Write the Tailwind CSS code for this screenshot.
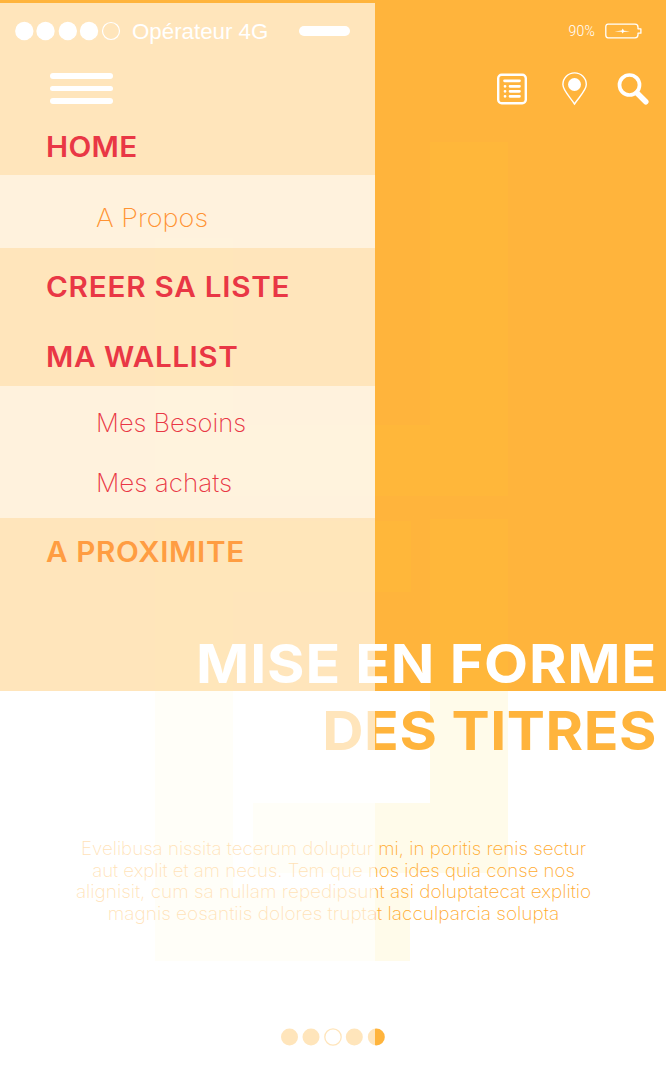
<!DOCTYPE html>
<html lang="fr">
<head>
<meta charset="utf-8">
<title>Wallist</title>
<script src="https://cdn.jsdelivr.net/npm/@tailwindcss/browser@4"></script>
</head>
<body class="bg-white">
<div class="relative w-[666px] h-[1083px] overflow-hidden font-['Inter',sans-serif] bg-linear-to-b from-[#ffb43c] from-[691.5px] to-white to-[691.5px]">
  <!-- watermark -->
  <svg class="absolute inset-0" width="666" height="1083" fill="#ffda33" fill-opacity=".1">
    <path d="M430 142h78v354H155V238h78v187h197z"/>
    <path d="M155 521h256v71H233v298h177v71H155z"/>
    <path d="M430 519h78v354H253v-70h177z"/>
  </svg>

  <header class="relative z-20 h-[120px] text-white">
    <div class="flex items-center h-[62px] pl-[15px] pr-[24px]">
      <svg width="106" height="20" viewBox="0 0 106 20" fill="#fff"><circle cx="9.3" cy="10" r="9.2"/><circle cx="30.5" cy="10" r="9.2"/><circle cx="52.8" cy="10" r="9.2"/><circle cx="74" cy="10" r="9.2"/><circle cx="96" cy="10" r="8.5" fill="none" stroke="#fff" stroke-width="1.2"/></svg>
      <span class="ml-[11px] mt-[2px] w-[167px] whitespace-nowrap text-[22.3px] leading-none font-['Liberation_Sans',sans-serif]">Opérateur 4G</span>
      <span class="w-[51px] h-[10px] rounded-full bg-white"></span>
      <span class="ml-auto mr-[10px] text-[14px] tracking-[0.2px] font-['Roboto',sans-serif] font-light">90%</span>
      <svg width="37" height="16" viewBox="0 0 37 16" fill="none" stroke="#fff" stroke-width="1.3"><path d="M3 1.2h27q3 0 3 3v1.600h2.900v4.400H33v1.600q0 3-3 3H3Q.8 14.800.8 12V4Q.8 1.200 3 1.200z" stroke-linejoin="round"/><path d="M9.500 8.400 16.700 7.400 17.700 5.600 19 7.700 25 8.200 18.600 9 17.800 10.600 16.400 8.700z" fill="#fff" stroke="none"/></svg>
    </div>
    <div class="flex items-start pl-[50px] pt-[10px] pr-[16px]">
      <div class="flex flex-col gap-[7px] w-[62.500px] pt-[1.300px]">
        <span class="h-[5.600px] rounded-full bg-white"></span><span class="h-[5.600px] rounded-full bg-white"></span><span class="h-[5.600px] rounded-full bg-white"></span>
      </div>
      <svg class="ml-auto mt-px" width="30" height="32" viewBox="0 0 30 32" fill="none" stroke="#fff"><rect x="1.200" y="1.700" width="27.600" height="28.600" rx="3.500" stroke-width="2.400"/><path d="M7.500 7.800h15M13 13.300h9.500M13 18.300h9.500M13 23.300h9.500M8 13.300h.1M8 18.300h.1M8 23.300h.1" stroke-width="2.700" stroke-linecap="round"/></svg>
      <svg class="ml-[35px]" width="26" height="34" viewBox="0 0 26 34"><path d="M12.500 32C8 25 .9 18.500.9 12.600a11.700 11.700 0 0 1 23.400 0C24.300 18.500 17 25 12.500 32z" fill="none" stroke="#fff" stroke-width="1.400"/><circle cx="12.500" cy="12.500" r="6.500" fill="#fff"/></svg>
      <svg class="ml-[29px]" width="33" height="34" viewBox="0 0 33 34" fill="none" stroke="#fff"><circle cx="12.500" cy="13" r="10" stroke-width="3.700"/><path d="M20 21 28.800 29.800" stroke-width="5.500" stroke-linecap="round"/></svg>
    </div>
  </header>

  <!-- side menu -->
  <nav class="absolute z-10 left-0 top-[2.500px] bottom-0 w-[375px] bg-white/65 pt-[117.500px] whitespace-nowrap text-[28px] leading-none font-semibold text-[#e93745]">
    <div class="h-[55.300px] pl-[46px] pt-[13px]"><span class="inline-block origin-left scale-x-[1.06] tracking-[0.3px]">HOME</span></div>
    <div class="h-[73px] pl-[96px] pt-[31px] bg-white/50 text-[25px] font-[150] text-[#ff9333]"><span class="inline-block origin-left scale-x-[1.08]">A Propos</span></div>
    <div class="h-[70px] pl-[46px] pt-[25px]"><span class="inline-block origin-left scale-x-[1.06] tracking-[0.7px]">CREER SA LISTE</span></div>
    <div class="h-[67.700px] pl-[46px] pt-[25px]"><span class="inline-block origin-left scale-x-[1.06] tracking-[0.5px]">MA WALLIST</span></div>
    <div class="h-[132px] pl-[95.500px] pt-[25px] bg-white/50 text-[25px] font-[150] flex flex-col items-start gap-[35px]"><span class="origin-left scale-x-[1.02]">Mes Besoins</span><span class="origin-left scale-x-[1.04]">Mes achats</span></div>
    <div class="pl-[46px] pt-[20px] text-[#ff9d42]"><span class="inline-block origin-left scale-x-[1.06] tracking-[0.6px]">A PROXIMITE</span></div>
  </nav>

  <main class="relative z-0">
    <h1 class="pt-[510px] pr-[9px] text-right text-[54px] leading-[67px] font-bold text-[#ffb43c] whitespace-nowrap"><span class="block origin-right scale-x-[1.06] text-white tracking-[0.75px]">MISE EN FORME</span><span class="block origin-right scale-x-[1.06] tracking-[0.5px]">DES TITRES</span></h1>
    <p class="mt-[74px] pl-px text-center text-[18px] leading-[21.700px] font-extralight text-[#ffab30] whitespace-nowrap"><span class="block scale-x-[1.04]">Evelibusa nissita tecerum doluptur mi, in poritis renis sectur</span><span class="block scale-x-[1.034]">aut explit et am necus. Tem que nos ides quia conse nos</span><span class="block scale-x-[1.053]">alignisit, cum sa nullam repedipsunt asi doluptatecat explitio</span><span class="block scale-x-[1.056]">magnis eosantiis dolores truptat lacculparcia solupta</span></p>
    <svg class="mt-[102px] ml-[280px]" width="106" height="20" viewBox="0 0 106 20" fill="#ffb43c"><circle cx="9.500" cy="10" r="8.500"/><circle cx="31" cy="10" r="8.500"/><circle cx="53" cy="10" r="8.200" fill="none" stroke="#ffb43c" stroke-width="1.300"/><circle cx="74.300" cy="10" r="8.500"/><circle cx="96.300" cy="10" r="8.500"/></svg>
  </main>
</div>
</body>
</html>
